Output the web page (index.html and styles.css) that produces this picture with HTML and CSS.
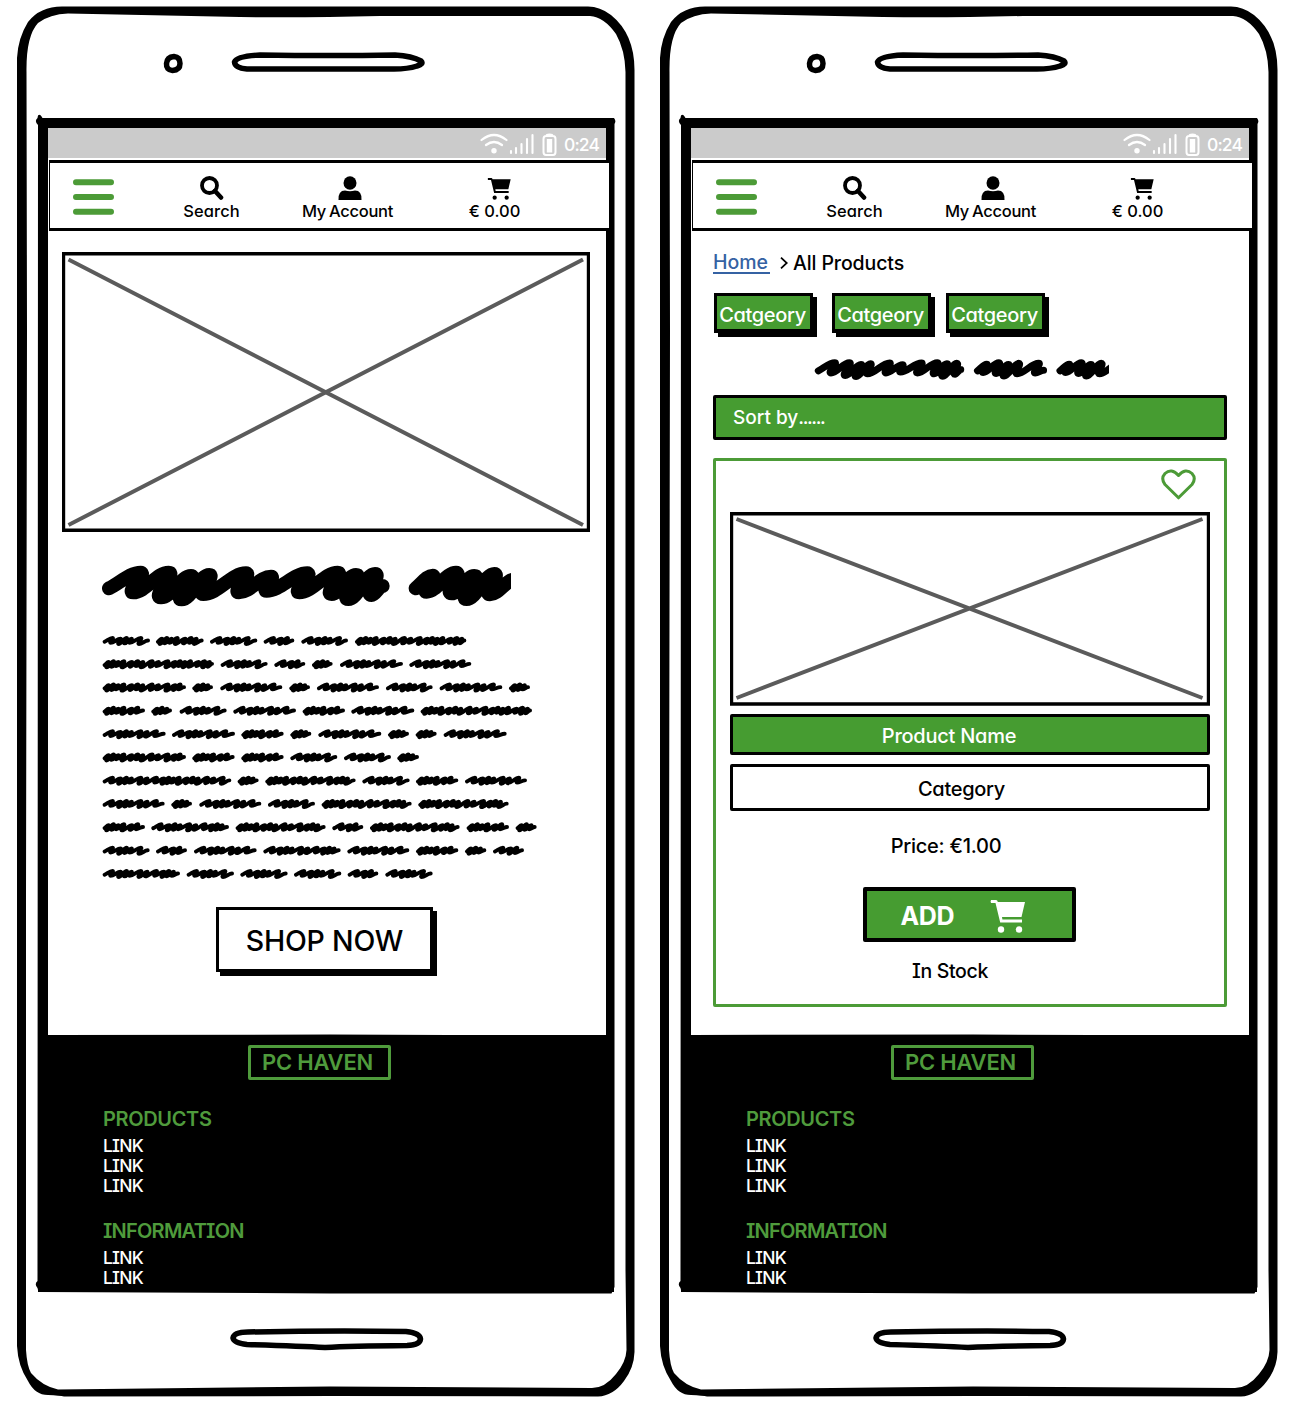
FILE: index.html
```
<!DOCTYPE html>
<html lang="en">
<head>
<meta charset="utf-8">
<title>PC Haven mobile wireframes</title>
<link rel="stylesheet" href="styles.css">
</head>
<body>
<svg class="defs" width="0" height="0" aria-hidden="true">
  <symbol id="frame" viewBox="0 0 643 1404">
    <path fill-rule="evenodd" d="M62 6.5H588Q600 6.500 611 15Q634.500 34 634.500 70V1352Q634 1368 624 1381Q613 1396 598 1396.500L330 1396L64 1396.500Q60 1395.500 48 1395Q35 1395 28 1381Q18 1366 17 1346V58Q18 38 28 22Q40 6.500 62 6.500ZM68 13.500Q50 14 38 23Q26 36 26.500 72L27 330L26 900V1350Q27 1366 31 1373Q42 1386 58 1389.500L330 1386.500L592 1388Q605 1388 616 1374Q626 1362 626.500 1350L625.500 1270V72Q625 50 616 34Q604 17 590 16L380 16Q300 18 240 17Z"/>
    <path d="M37.500 118L38 115.500Q40 113 42.500 118H614Q616.500 121 614.500 124V1287L611.500 1293.500L330 1293.500L38.500 1292L37.500 1288Q34 1284 37.500 1281L38 125Q34 121 37.500 118Z"/>
    <path fill="#fff" d="M48 128H606V1035.500L330 1034.500L48 1035Z"/>
    <g fill="none" stroke="#000" stroke-width="5.500" stroke-linejoin="round">
      <path d="M174 56.500Q180 57 180 63.500T172.500 70.500Q166 70 166.500 63.500T174 56.500Z"/>
      <path d="M260 55Q330 56 395 55Q412 56 421 61Q424 64 417 66Q408 69 394 69H247Q235 68 234.500 62Q237 56 260 55Z"/>
      <path d="M248 1332Q330 1330.500 406 1331.500Q420 1333 420.500 1339Q420 1345 407 1345.500Q350 1346 325 1347.500Q300 1346 247 1344.500Q234 1343 233 1338Q234 1332 248 1332Z"/>
    </g>
  </symbol>
  <symbol id="cart" viewBox="0 0 35 33">
    <path d="M1.200 0H6Q7.500 0 7.800 2H35L31.500 17H12L12.400 19.500H32V22.500H10.200L5.500 3H1.200Q0 1.500 1.200 0Z"/>
    <circle cx="11" cy="29.500" r="3.200"/><circle cx="29" cy="29.500" r="3.200"/>
  </symbol>
  <symbol id="search" viewBox="0 0 24 24">
    <circle cx="9.500" cy="9.500" r="7.500" fill="none" stroke="#000" stroke-width="3.800"/>
    <path d="M15 15L21 21.500" fill="none" stroke="#000" stroke-width="4.600" stroke-linecap="round"/>
  </symbol>
  <symbol id="person" viewBox="0 0 24 24">
    <ellipse cx="12" cy="7" rx="6.500" ry="6.700"/>
    <path d="M.5 24Q0 14.500 7 14.500Q12 16 17 14.500Q24 14.500 23.500 24Z"/>
  </symbol>
  <symbol id="menu" viewBox="0 0 41 36">
    <path d="M3 3.200H38M3 18H38M3 32.800H38" fill="none" stroke="#4c9b37" stroke-width="6" stroke-linecap="round"/>
  </symbol>
  <symbol id="status" viewBox="0 0 78 24">
    <g fill="none" stroke="#fff" stroke-width="2.200" stroke-linecap="round">
      <path d="M1.500 7Q14 -3 26.500 7M6 12Q14 6 22 12"/>
      <path d="M31 20V18M36 20V15M41.500 20V11M47 20V6M52.500 20V2" stroke-width="2.100"/>
      <path d="M66.500 2.500Q66.500 1.500 69.500 1.500T72.500 2.500M66 3H73Q75.500 3 75.500 6V19Q75.500 22 73 22H66Q63.500 22 63.500 19V6Q63.500 3 66 3Z" stroke-width="2"/>
    </g>
    <circle cx="14" cy="17.800" r="2.700" fill="#fff"/>
    <rect x="66.800" y="6" width="5.400" height="13.500" fill="#fff"/>
  </symbol>
</svg>

<section class="phone">
  <svg class="frame"><use href="#frame"/></svg>
  <div class="screen">
    <div class="statusbar"><svg class="status-icons"><use href="#status"/></svg><span class="clock">0:24</span></div>
    <nav class="topnav">
      <svg class="menu"><use href="#menu"/></svg>
      <div class="nav-item nav-search"><svg class="nav-icon"><use href="#search"/></svg><span class="t-search">Search</span></div>
      <div class="nav-item nav-account"><svg class="nav-icon"><use href="#person"/></svg><span class="t-account">My Account</span></div>
      <div class="nav-item nav-cart"><svg class="nav-icon cart-small"><use href="#cart"/></svg><span class="t-total">€ 0.00</span></div>
    </nav>
    <main class="home">
      <svg class="hero" viewBox="0 0 528 280"><path d="M1.500 1.700H526.500V278.300H1.500Z" fill="#fff" stroke="#000" stroke-width="3.400"/><path d="M6.500 7.500L521 273M521 7.500L6.500 273" fill="none" stroke="#5b5b5b" stroke-width="4"/></svg>
      <svg class="scribble title-scribble" viewBox="0 0 414.500 48" data-scribble="title"></svg>
      <svg class="scribble body-scribble" viewBox="0 0 450 255" data-scribble="body"></svg>
      <button class="shop">SHOP NOW</button>
    </main>
    <footer class="footer">
      <div class="logo">PC HAVEN</div>
      <h2 class="t-products">PRODUCTS</h2>
      <ul><li>LINK</li><li>LINK</li><li>LINK</li></ul>
      <h2 class="t-information">INFORMATION</h2>
      <ul><li>LINK</li><li>LINK</li></ul>
    </footer>
  </div>
</section>

<section class="phone">
  <svg class="frame"><use href="#frame"/></svg>
  <div class="screen">
    <div class="statusbar"><svg class="status-icons"><use href="#status"/></svg><span class="clock">0:24</span></div>
    <nav class="topnav">
      <svg class="menu"><use href="#menu"/></svg>
      <div class="nav-item nav-search"><svg class="nav-icon"><use href="#search"/></svg><span class="t-search">Search</span></div>
      <div class="nav-item nav-account"><svg class="nav-icon"><use href="#person"/></svg><span class="t-account">My Account</span></div>
      <div class="nav-item nav-cart"><svg class="nav-icon cart-small"><use href="#cart"/></svg><span class="t-total">€ 0.00</span></div>
    </nav>
    <main class="products">
      <div class="crumbs"><a class="t-home">Home</a><svg class="chevron" viewBox="0 0 8 12"><path d="M1 .7L6.800 6L1 11.300" fill="none" stroke="#000" stroke-width="1.800"/></svg><span class="t-all">All Products</span></div>
      <div class="tags"><button class="tag">Catgeory</button><button class="tag">Catgeory</button><button class="tag">Catgeory</button></div>
      <svg class="scribble list-scribble" viewBox="0 0 299 24" data-scribble="list"></svg>
      <div class="sort"><span class="t-sort">Sort by<span class="dots">......</span></span></div>
      <article class="card">
        <svg class="heart" viewBox="0 0 35 31"><path d="M17.500 28.800L4 15.500Q-.5 9.500 4 4.500Q10.500 -1.500 17.500 6.500Q24.500 -1.500 31 4.500Q35.500 9.500 31 15.500Z" fill="none" stroke="#4c9b37" stroke-width="3" stroke-linejoin="round"/></svg>
        <svg class="thumb" viewBox="0 0 480 194"><path d="M1.500 1.700H478.500V192H1.500Z" fill="#fff" stroke="#000" stroke-width="3.400"/><path d="M6.500 7L472.500 186M472.500 7L6.500 186" fill="none" stroke="#5b5b5b" stroke-width="4"/></svg>
        <div class="bar bar-name"><span class="t-name">Product Name</span></div>
        <div class="bar bar-category"><span class="t-category">Category</span></div>
        <p class="price">Price: €1.00</p>
        <button class="add"><span class="t-add">ADD</span><svg class="cart-big"><use href="#cart"/></svg></button>
        <p class="stock">In Stock</p>
      </article>
    </main>
    <footer class="footer">
      <div class="logo">PC HAVEN</div>
      <h2 class="t-products">PRODUCTS</h2>
      <ul><li>LINK</li><li>LINK</li><li>LINK</li></ul>
      <h2 class="t-information">INFORMATION</h2>
      <ul><li>LINK</li><li>LINK</li></ul>
    </footer>
  </div>
</section>
<script src="scribble.js"></script>
</body>
</html>
```
FILE: styles.css
```
* { box-sizing: border-box; }
body {
  margin: 0; width: 1292px; height: 1404px; display: flex; overflow: hidden;
  background: #fff; color: #000;
  font-family: Inter, "Noto Sans", sans-serif; font-weight: 450;
  font-feature-settings: "cv08", "cv11", "calt" 0;
}
.defs { position: absolute; }
svg { display: block; flex: none; }
h2, p, ul { margin: 0; padding: 0; }
span, a, p, h2, li, .logo, button { white-space: nowrap; }
button { font: inherit; font-feature-settings: inherit; padding: 0; color: inherit; }

.phone { display: grid; width: 643px; height: 1404px; flex: none; }
.phone > * { grid-area: 1 / 1; }
.frame { width: 643px; height: 1404px; }
.screen { padding: 128px 0 0 48px; width: 643px; z-index: 1; }

.statusbar {
  display: flex; align-items: center; width: 558px; height: 30px;
  padding-left: 432px; background: #cbcbcb; color: #fff;
}
.status-icons { width: 78px; height: 24px; margin-top: 3px; }
.clock { margin-left: 6px; margin-top: 3px; font-size: 17.500px; letter-spacing: -.9px; }

.topnav {
  display: flex; width: 562px; height: 71px; margin: 2px 0 0 1px;
  border: solid #000; border-width: 3.500px 2px 3.500px 1.500px;
  padding: 12.500px 0 0 23px; background: #fff;
}
.menu { width: 41px; height: 36px; margin-top: 3px; }
.nav-item { display: flex; flex-direction: column; align-items: center; font-size: 16.500px; line-height: 20px; gap: 1px; }
.nav-icon { width: 24px; height: 24px; }
.nav-search { width: 100px; margin-left: 47.500px; }
.nav-account { width: 120px; margin-left: 26px; }
.nav-account .nav-icon { margin-left: 4px; }
.nav-cart { width: 100px; margin-left: 37px; }
.nav-cart .nav-icon { margin: 2px 0 0 9px; height: 22px; }
.t-search { letter-spacing: .1px; }
.t-account { letter-spacing: -.3px; word-spacing: -1px; }

.home { width: 558px; height: 804px; padding: 21px 0 0 14px; }
.hero { width: 528px; height: 280px; }
.title-scribble { width: 414.500px; height: 48px; margin: 30px 0 0 34px; }
.body-scribble { width: 450px; height: 255px; margin: 20px 0 0 34px; }
.scribble { overflow: hidden; }
.scribble path { fill: none; stroke: #000; stroke-linecap: round; stroke-linejoin: round; }
.shop {
  display: block; width: 217px; height: 65px; margin: 22px 0 0 154px; padding-top: 2px;
  border: solid #000; border-width: 3.500px 3px 3.500px 3px; background: #fff;
  box-shadow: 4px 4px 0 #000; font-size: 28.500px; letter-spacing: -.2px;
}

.footer { width: 576px; height: 257px; margin-left: -10px; padding: 10px 0 0 65px; background: #000; color: #fff; }
.logo {
  display: flex; align-items: center; justify-content: center;
  width: 143px; height: 34.500px; margin-left: 144.500px; padding-right: 3px;
  border: 3.500px solid #4f9b3c; border-radius: 2px; color: #4f9b3c;
  font-size: 22px; font-weight: 600; letter-spacing: -.2px;
}
.footer h2 { color: #4f9b3c; font-size: 20px; font-weight: 600; line-height: 24px; }
.t-products { margin-top: 27px; letter-spacing: -.35px; }
.t-information { margin-top: 23.500px; letter-spacing: -.75px; }
.footer ul { list-style: none; font-size: 17.500px; line-height: 20px; margin-top: 5px; letter-spacing: -.8px; }

.products { width: 558px; height: 804px; padding: 19px 0 0 22px; }
.crumbs { display: flex; align-items: center; height: 24px; font-size: 19.500px; line-height: 22px; }
.t-home { color: #3562a3; border-bottom: 2px solid #3562a3; line-height: 20px; width: 57px; padding-top: 1px; }
.t-all { padding-top: 1px; letter-spacing: -.1px; }
.chevron { width: 8px; height: 12px; margin: 1px 5px 0 10px; }
.tags { display: flex; margin: 19px 0 0 1px; }
.tag {
  width: 99px; height: 40px; border: solid #000; border-width: 3.500px 3px 4px 3.500px;
  padding: 5px 2px 0 0; box-shadow: 4px 4px 0 #000; background: #469c31; color: #fff; font-size: 20px; letter-spacing: -.35px;
}
.tag:nth-child(2) { margin-left: 19px; }
.tag:nth-child(3) { margin-left: 15px; }
.list-scribble { width: 299px; height: 24px; margin: 24px 0 0 97px; }
.sort {
  display: flex; align-items: center; width: 514px; height: 45px; margin-top: 14px;
  border: 3.500px solid #000; border-radius: 2px; background: #469c31; color: #fff;
  padding-left: 17px; font-size: 19px;
}
.dots { letter-spacing: -1.400px; }
.card {
  display: flex; flex-direction: column; width: 514px; height: 549px; margin-top: 18px;
  border: 3.500px solid #4c9b37; border-radius: 2px; padding: 8px 0 0 13.500px;
}
.heart { width: 35px; height: 31px; margin-left: 431px; }
.thumb { width: 480px; height: 194px; margin-top: 11.500px; }
.bar {
  display: flex; align-items: center; justify-content: center; width: 480px;
  border: 3.500px solid #000; border-radius: 2px; font-size: 20px; letter-spacing: -.3px;
}
.bar-name { height: 41px; margin-top: 8.500px; background: #469c31; color: #fff; padding: 2px 41px 0 0; letter-spacing: -.25px; }
.bar-category { height: 47px; margin-top: 9px; padding: 3px 16px 0 0; }
.price { width: 433px; text-align: center; margin-top: 23px; font-size: 20px; line-height: 24px; letter-spacing: -.25px; }
.add {
  display: flex; align-items: center; width: 213px; height: 55px; margin: 28.500px 0 0 133.500px;
  border: 4px solid #000; border-radius: 2px; background: #469c31; color: #fff; padding-left: 33.500px;
}
.t-add { width: 55px; font-size: 25px; font-weight: 700; text-align: left; padding-top: 4px; letter-spacing: -.4px; }
.cart-big { width: 35px; height: 33px; margin: 5px 0 0 34px; fill: #fff; }
.stock { width: 441px; text-align: center; margin-top: 17px; font-size: 19.500px; line-height: 24px; letter-spacing: -.35px; }
```
FILE: scribble.js
```
// Handwriting placeholders: every pair is the start and end of one word on a line.
const STEPS = [24, 18, 15, 28, 19, 28, 22, 15, 14, 17];

// Joins alternating low and high points with pen-like S curves.
function pen(p) {
  let d = `M${p[0]} ${p[1]}`;
  for (let i = 2; i < p.length; i += 2) {
    const [ax, ay, bx, by] = [p[i - 2], p[i - 1], p[i], p[i + 1]];
    const h = Math.abs(by - ay);
    if (by < ay) d += `C${ax + (bx - ax) * 0.35} ${i === 2 ? ay - h * 0.35 : ay} ${bx - (bx - ax) * 0.35} ${by} ${bx} ${by}`;
    else d += `C${ax + h * 0.35} ${ay} ${bx - h * 0.4} ${by} ${bx} ${by}`;
  }
  return d;
}

// Builds one zigzag word between x0 and x1; `unit` scales the rhythm of the strokes.
function word(x0, x1, top, bottom, stroke, unit) {
  const r = stroke / 2;
  const end = x1 - r;
  const width = (x1 - x0) / unit;
  const mid = (top + bottom) / 2;
  const wide = [92, 141, 187.5, 232, 386].some(w => Math.abs(w - width) < 1.6);
  const points = [x0 + r, mid + r * 0.4];
  let i = wide ? 0 : 7;
  let peak = points[0] + (wide ? 24 : 12) * unit;
  while (peak < end - 1) {
    const dip = i % 3 === 1 ? 1 : i % 3 === 2 ? 0.8 : 0.6;
    points.push(peak, top + (i % 2) * r * 0.4, peak - 6 * unit, mid + (bottom - mid) * dip);
    peak += STEPS[i % STEPS.length] * unit;
    i++;
  }
  points.push(end, mid - r * 0.2);
  return pen(points);
}

const big = [
  [57,115,152,68,130,127,236,68,213,142,303,78,275,148,358,75,340,132,468,70,447,127,543,80,530,122,652,70,628,127,743,68,725,132,798,75,775,147,855,72,845,135,878,108],
  [977,115,1028,77,1010,125,1098,68,1085,130,1153,78,1130,147,1213,72,1200,133,1275,88]
];
const bodyLines = [
  [38,180,198,341,360,502,521,613,634,774,795,1129],
  [38,372,392,533,553,646,666,728,750,939,958,1144],
  [38,288,307,369,391,577,598,660,681,867,888,1028,1049,1237,1257,1320],
  [38,165,184,246,269,410,430,618,638,765,784,973,992,1326],
  [38,227,246,435,454,581,601,664,685,874,894,957,977,1040,1061,1250],
  [38,288,307,434,454,581,601,742,762,903,922,987],
  [38,424,443,506,526,797,817,959,978,1105,1125,1311],
  [38,224,244,306,328,514,534,675,695,965,985,1256],
  [38,165,184,417,437,707,727,820,840,1109,1130,1257,1277,1340],
  [38,179,198,291,312,500,520,752,772,958,978,1105,1125,1189,1209,1302],
  [38,270,290,432,451,593,612,754,773,865,886,1028]
];

function trace(points, fx, fy) {
  return pen(points.map((v, i) => i % 2 ? fy(v) : fx(v)));
}
function draw(name, d, width) {
  const svg = document.querySelector(`[data-scribble="${name}"]`);
  const path = document.createElementNS('http://www.w3.org/2000/svg', 'path');
  path.setAttribute('d', d);
  path.setAttribute('stroke-width', width);
  svg.append(path);
}

draw('title', big.map(w => trace(w, x => (x - 18) / 3, y => (y - 36) / 3)).join(''), 14);

let body = '';
bodyLines.forEach((line, n) => {
  for (let i = 0; i < line.length; i += 2) {
    body += word((line[i] - 18) / 3, (line[i + 1] - 18) / 3, 7.9 + n * 23.3, 14 + n * 23.3, 3.9, 1 / 3);
  }
});
draw('body', body, 3.9);

const s = 0.1735;
draw('list',
  trace(big[0], x => (x - 38) * s + 5, y => (y - 47) * s + 2) +
  trace([977,115,1030,77,1010,125,1100,68,1085,130,1155,78,1130,145,1215,72,1205,132,1330,72,1310,128,1358,112], x => (x - 957) * s + 164, y => (y - 47) * s + 2) +
  trace([977,115,1030,77,1010,125,1100,68,1085,130,1155,78,1130,145,1215,72,1205,132,1320,72], x => (x - 957) * s + 246.5, y => (y - 47) * s + 2), 7);
```
